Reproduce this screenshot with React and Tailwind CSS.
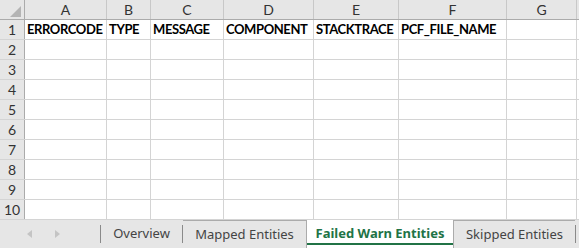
const cols = [
  { key: "A", w: 82 },
  { key: "B", w: 44 },
  { key: "C", w: 73 },
  { key: "D", w: 90 },
  { key: "E", w: 85 },
  { key: "F", w: 108 },
  { key: "G", w: 70 },
];

const headings = ["ERRORCODE", "TYPE", "MESSAGE", "COMPONENT", "STACKTRACE", "PCF_FILE_NAME", ""];

const rows = [1, 2, 3, 4, 5, 6, 7, 8, 9, 10];

export default function App() {
  return (
    <div
      className="w-[579px] h-[248px] bg-white overflow-hidden flex flex-col"
      style={{ fontFamily: "Lato, 'Liberation Sans', sans-serif" }}
    >
      {/* column letters */}
      <div className="flex h-[20px] bg-[#e6e6e6] border-b border-[#ababab]">
        <div className="w-[25px] shrink-0 border-r border-[#ababab] flex items-end justify-end pr-[3px] pb-[2px]">
          <div className="w-0 h-0 border-l-[11px] border-l-transparent border-b-[11px] border-b-[#b4b4b4]" />
        </div>
        {cols.map((c) => (
          <div
            key={c.key}
            style={{ width: c.w }}
            className="shrink-0 border-r border-[#c8c8c8] flex items-center justify-center text-[14px] text-[#333]"
          >
            {c.key}
          </div>
        ))}
        <div className="flex-1" />
      </div>

      {/* grid rows */}
      {rows.map((r) => (
        <div key={r} className="flex h-[20px] border-b border-[#d4d4d4]">
          <div className="w-[25px] shrink-0 bg-[#e6e6e6] border-r border-[#ababab] flex items-center justify-center text-[14px] text-[#333]">
            {r}
          </div>
          {cols.map((c, i) => (
            <div
              key={c.key}
              style={{ width: c.w }}
              className="shrink-0 border-r border-[#d4d4d4] flex items-center pl-[2px] text-[13px] font-bold tracking-[-0.4px] text-black whitespace-nowrap"
            >
              {r === 1 ? headings[i] : ""}
            </div>
          ))}
          <div className="flex-1" />
        </div>
      ))}

      {/* sheet tabs */}
      <div
        className="flex-1 flex bg-[#e6e6e6] text-[13px] text-[#444]"
        style={{ fontFamily: "'Noto Sans', 'Open Sans', sans-serif" }}
      >
        <div className="w-[100px] shrink-0 flex items-center pl-[27px] gap-[23px]">
          <div className="w-0 h-0 border-y-[4px] border-y-transparent border-r-[5px] border-r-[#c4c4c4]" />
          <div className="w-0 h-0 border-y-[4px] border-y-transparent border-l-[5px] border-l-[#c4c4c4]" />
        </div>
        <div className="w-[1px] h-[18px] mt-[5px] bg-[#8a8a8a]" />
        <div className="w-[81px] shrink-0 flex items-center justify-center">Overview</div>
        <div className="w-[1px] h-[18px] mt-[5px] bg-[#8a8a8a]" />
        <div className="w-[123px] shrink-0 flex items-center justify-center border-t border-[#ababab]">
          Mapped Entities
        </div>
        <div className="w-[148px] shrink-0 flex items-center justify-center bg-white border-x border-[#ababab] font-bold text-[#217346] relative">
          Failed Warn Entities
          <div className="absolute left-0 right-0 bottom-[3px] h-[2px] bg-[#217346]" />
        </div>
        <div className="w-[121px] shrink-0 flex items-center justify-center border-t border-[#ababab]">
          Skipped Entities
        </div>
        <div className="w-[1px] h-[18px] mt-[5px] bg-[#8a8a8a]" />
      </div>
    </div>
  );
}
